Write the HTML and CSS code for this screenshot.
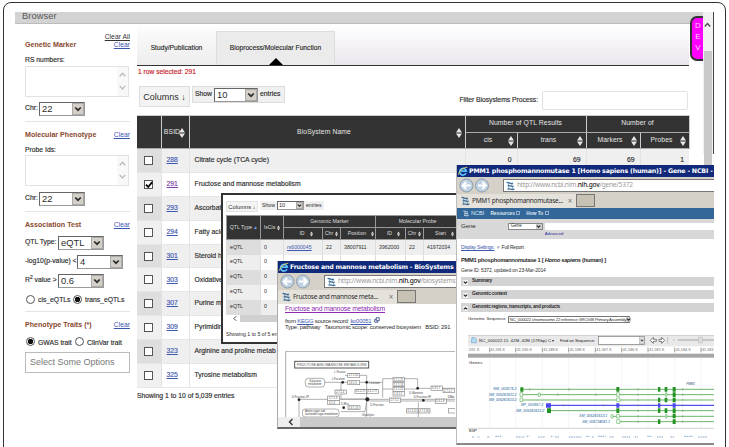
FILE: index.html
```html
<!DOCTYPE html>
<html lang="en">
<head>
  <meta charset="UTF-8">
  <title>Browser</title>
  <meta name="viewport" content="width=device-width, initial-scale=1">
  <link rel="stylesheet" href="styles.css">
</head>
<body>
  <svg width="0" height="0" class="defs">
    <symbol id="chev" viewBox="0 0 8 8"><path d="M1.2 2.5 4 5.2 6.8 2.5" fill="none" stroke="currentColor" stroke-width="1.7"/></symbol>
    <symbol id="sort" viewBox="0 0 6 10"><path d="M3 0 6 4.4H0zM3 10 6 5.6H0z" fill="currentColor"/></symbol>
    <symbol id="scroll" viewBox="0 0 8 26"><path d="M.8 7 4 3.5 7.2 7M.8 18 4 21.5 7.2 18" fill="none" stroke="#bbb" stroke-width="1.5"/></symbol>
    <symbol id="ie" viewBox="0 0 10 10"><path d="M8 7.2A3.3 3.3 0 1 1 8.3 5.2H3" fill="none" stroke="#5bc0f5" stroke-width="1.7"/><path d="M.8 8.8C-.4 7 5 1 9.3 1.3" fill="none" stroke="#f3d25b" stroke-width=".9"/></symbol>
    <symbol id="ncbi" viewBox="0 0 9 10"><path d="M.6 1.6C2.5.3 3.5 3.6 7 2.2M1.6 5C3.2 3.6 5 6.4 7.8 5M1.6 8.4C3.8 6.6 5 9.8 8.4 8" fill="none" stroke="currentColor" stroke-width="1.3"/><path d="M2 2.2 3.2 4.6M6 5.6l1 2.2M6.4 2.6 5.6 4.6M3 5.2l-.8 2.4" stroke="currentColor" stroke-width=".7"/></symbol>
    <symbol id="nav" viewBox="0 0 30 15">
      <circle cx="7.5" cy="7.5" r="6.5" fill="#c0d2e2" stroke="#8d9dab"/><circle cx="23" cy="7.5" r="6.5" fill="#c0d2e2" stroke="#8d9dab"/>
      <path d="M11.5 7.5H4M7.2 4 3.7 7.5 7.2 11M19 7.5h7.5M23.3 4l3.5 3.5-3.5 3.5" fill="none" stroke="#fff" stroke-width="2"/>
    </symbol>
  </svg>

  <div class="frame">
    <div class="topbar"><span>Browser</span></div>
    <div class="page">
      <aside class="sidebar">
        <div class="clear-all"><a>Clear All</a></div>
        <section class="group first">
          <div class="group-head"><h2>Genetic Marker</h2><a>Clear</a></div>
          <label class="lbl">RS numbers:</label>
          <div class="area"><svg><use href="#scroll"/></svg></div>
          <div class="field chr"><span>Chr:</span><div class="select">22<i><svg><use href="#chev"/></svg></i></div></div>
        </section>
        <section class="group">
          <div class="group-head"><h2>Molecular Phenotype</h2><a>Clear</a></div>
          <label class="lbl">Probe Ids:</label>
          <div class="area"><svg><use href="#scroll"/></svg></div>
          <div class="field chr"><span>Chr:</span><div class="select">22<i><svg><use href="#chev"/></svg></i></div></div>
        </section>
        <section class="group assoc">
          <div class="group-head"><h2>Association Test</h2><a>Clear</a></div>
          <div class="field qtl"><span>QTL Type:</span><div class="select">eQTL<i><svg><use href="#chev"/></svg></i></div></div>
          <div class="field pval"><span>-log10(p-value) &lt;</span><div class="select">4<i><svg><use href="#chev"/></svg></i></div></div>
          <div class="field qtl"><span>R<sup>2</sup> value &gt;</span><div class="select">0.6<i><svg><use href="#chev"/></svg></i></div></div>
          <div class="radios"><b class="radio"></b><span class="w1">cis_eQTLs</span><b class="radio on"></b><span>trans_eQTLs</span></div>
        </section>
        <section class="group traits">
          <div class="group-head"><h2>Phenotype Traits (*)</h2><a>Clear</a></div>
          <div class="radios"><b class="radio on"></b><span class="w2">GWAS trait</span><b class="radio"></b><span>ClinVar trait</span></div>
          <div class="options">Select Some Options</div>
        </section>
      </aside>

      <main class="main">
        <nav class="tabs">
          <div class="tab">Study/Publication</div>
          <div class="tab active">Bioprocess/Molecular Function</div>
        </nav>
        <p class="selected">1 row selected: 291</p>
        <div class="tools">
          <div class="columns">Columns ↓</div>
          <div class="show"><span>Show</span><div class="select">10<i><svg><use href="#chev"/></svg></i></div><span>entries</span></div>
          <div class="filter"><span>Filter Biosystems Process:</span><div class="filter-box"></div></div>
        </div>
        <table class="grid">
          <colgroup><col class="c1"><col class="c2"><col class="c3"><col class="c4"><col class="c5"><col class="c6"><col class="c7"></colgroup>
          <thead>
            <tr>
              <th rowspan="2"></th>
              <th rowspan="2" class="bsid"><div>BSID<svg><use href="#sort"/></svg></div></th>
              <th rowspan="2"><div>BioSystem Name<svg><use href="#sort"/></svg></div></th>
              <th colspan="2">Number of QTL Results</th>
              <th colspan="2">Number of</th>
            </tr>
            <tr>
              <th><div>cis<svg><use href="#sort"/></svg></div></th>
              <th><div>trans<svg><use href="#sort"/></svg></div></th>
              <th><div>Markers<svg><use href="#sort"/></svg></div></th>
              <th><div>Probes<svg><use href="#sort"/></svg></div></th>
            </tr>
          </thead>
          <tbody>
            <tr><td><b class="check"></b></td><td><a>288</a></td><td>Citrate cycle (TCA cycle)</td><td>0</td><td>69</td><td>69</td><td>1</td></tr>
            <tr><td><b class="check"><svg viewBox="0 0 8 8"><path d="M1 3.6 3.2 6 7.2 1.2" fill="none" stroke="#000" stroke-width="1.8"/></svg></b></td><td><a class="visited">291</a></td><td>Fructose and mannose metabolism</td><td></td><td></td><td></td><td></td></tr>
            <tr><td><b class="check"></b></td><td><a>293</a></td><td>Ascorbat</td><td></td><td></td><td></td><td></td></tr>
            <tr><td><b class="check"></b></td><td><a>294</a></td><td>Fatty acid</td><td></td><td></td><td></td><td></td></tr>
            <tr><td><b class="check"></b></td><td><a>301</a></td><td>Steroid h</td><td></td><td></td><td></td><td></td></tr>
            <tr><td><b class="check"></b></td><td><a>303</a></td><td>Oxidative</td><td></td><td></td><td></td><td></td></tr>
            <tr><td><b class="check"></b></td><td><a>307</a></td><td>Purine m</td><td></td><td></td><td></td><td></td></tr>
            <tr><td><b class="check"></b></td><td><a>309</a></td><td>Pyrimidin</td><td></td><td></td><td></td><td></td></tr>
            <tr><td><b class="check"></b></td><td><a>323</a></td><td>Arginine and proline metab</td><td></td><td></td><td></td><td></td></tr>
            <tr><td><b class="check"></b></td><td><a>325</a></td><td>Tyrosine metabolism</td><td></td><td></td><td></td><td></td></tr>
          </tbody>
        </table>
        <p class="count">Showing 1 to 10 of 5,039 entries</p>
      </main>

      <div class="scrollbar"><svg viewBox="0 0 9 38"><path d="M1.8 14 4.5 11 7.2 14" fill="none" stroke="#555" stroke-width="1.5"/></svg><div></div></div>
    </div>
    <div class="dev"><span>D</span><span>E</span><span>V</span></div>
  </div>

  <!-- eQTL details -->
  <div class="win details">
    <div class="dtools"><div class="dcols">Columns ↓</div><div class="dshow">Show <div class="select">10<i><svg><use href="#chev"/></svg></i></div> entries</div></div>
    <table class="dgrid">
      <colgroup><col class="d1"><col class="d2"><col class="d3"><col class="d4"><col class="d5"><col class="d6"><col class="d7"><col class="d8"></colgroup>
      <thead>
        <tr><th rowspan="2"><div>QTL Type <em>▴</em></div></th><th rowspan="2"><div>IsCis<svg><use href="#sort"/></svg></div></th><th colspan="3">Genomic Marker</th><th colspan="3">Molecular Probe</th></tr>
        <tr>
          <th><div>ID<svg><use href="#sort"/></svg></div></th><th><div>Chr<svg><use href="#sort"/></svg></div></th><th><div>Position<svg><use href="#sort"/></svg></div></th>
          <th><div>ID<svg><use href="#sort"/></svg></div></th><th><div>Chr<svg><use href="#sort"/></svg></div></th><th><div>Start<svg><use href="#sort"/></svg></div></th>
        </tr>
      </thead>
      <tbody>
        <tr><td>eQTL</td><td>0</td><td><a>rs6000045</a></td><td>22</td><td>38007911</td><td>3962000</td><td>22</td><td>41972034</td></tr>
        <tr><td>eQTL</td><td>0</td><td></td><td></td><td></td><td></td><td></td><td></td></tr>
        <tr><td>eQTL</td><td>0</td><td></td><td></td><td></td><td></td><td></td><td></td></tr>
        <tr><td>eQTL</td><td>0</td><td></td><td></td><td></td><td></td><td></td><td></td></tr>
        <tr><td>eQTL</td><td>0</td><td></td><td></td><td></td><td></td><td></td><td></td></tr>
      </tbody>
    </table>
    <div class="hscroll"><svg viewBox="0 0 8 8"><path d="M5.5 1 2.5 4l3 3" fill="none" stroke="#333" stroke-width="1.2"/></svg><div></div></div>
    <p class="dcount">Showing 1 to 5 of 5 ent</p>
  </div>

  <!-- BioSystems page -->
  <div class="win bio">
    <div class="title"><svg><use href="#ie"/></svg><span>Fructose and mannose metabolism - BioSystems</span></div>
    <div class="address"><svg class="nav"><use href="#nav"/></svg><div class="url"><svg><use href="#ncbi"/></svg><span>http://www.ncbi.nlm.<b>nih.gov</b>/biosystems</span></div></div>
    <div class="wtabs"><div class="wtab"><svg><use href="#ncbi"/></svg><span>Fructose and mannose meta...</span><i>×</i></div><div class="newtab"></div></div>
    <div class="bio-body">
      <a class="bio-title">Fructose and mannose metabolism</a>
      <p>from <a>KEGG</a> source record: <a>ko00051</a> &nbsp;<svg viewBox="0 0 8 8"><path d="M3 1h4v4H3zM3 3H1v4h4V5" fill="none" stroke="#22337a"/></svg></p>
      <p class="type">Type: pathway &nbsp; Taxonomic scope: conserved biosystem &nbsp; BSID: 291</p>
      <svg class="pathway" viewBox="210 124 510 198">
        <path d="M212 322V125H720" fill="none" stroke="#aaa" stroke-width="3"/>
        <rect x="239" y="155" width="222" height="20" fill="#fff" stroke="#555" stroke-width="3"/>
        <text x="246" y="170" font-size="12" fill="#555" textLength="208" lengthAdjust="spacingAndGlyphs">FRUCTOSE AND MANNOSE METABOLISM</text>
        <g fill="none" stroke="#888" stroke-width="2">
          <path d="M330 218H455M378 218v50M390 197h65v123M455 218h48V207h105v28M503 218v46M503 238h102M248 269H720M455 274H720M252 269v53M378 306h72l6-36M610 278v44M605 236h115M378 268h77"/>
        </g>
        <g fill="#fff" stroke="#888" stroke-width="2">
          <rect x="271" y="206" width="58" height="26" rx="9"/><rect x="262" y="298" width="110" height="24" rx="9"/>
          <rect x="398" y="191" width="36" height="12"/><rect x="398" y="213" width="36" height="12"/><rect x="360" y="241" width="34" height="12"/>
          <rect x="420" y="239" width="34" height="12"/><rect x="456" y="239" width="34" height="12"/><rect x="338" y="259" width="36" height="13"/><rect x="338" y="272" width="36" height="13"/>
          <rect x="399" y="288" width="36" height="12"/><rect x="534" y="203" width="34" height="13"/><rect x="534" y="218" width="34" height="13"/><rect x="534" y="232" width="34" height="13"/><rect x="534" y="246" width="34" height="13"/>
          <rect x="523" y="265" width="34" height="13"/><rect x="648" y="229" width="34" height="13"/><rect x="684" y="236" width="34" height="13"/><rect x="661" y="268" width="34" height="13"/><rect x="575" y="297" width="34" height="13"/><rect x="611" y="297" width="34" height="13"/><rect x="700" y="297" width="34" height="13"/>
        </g>
        <g font-size="8" fill="#444">
          <text x="283" y="216">Galactose</text><text x="279" y="227">metabolism</text><text x="270" y="308">Amino sugar and</text><text x="270" y="317" textLength="98">nucleotide sugar metabolism</text>
          <text x="358" y="189">L-Fucose</text><text x="350" y="212">L-Fuculose</text><text x="461" y="222">L-Lactate</text><text x="230" y="264">D-Fructose-1P</text><text x="378" y="286">D-Rha</text><text x="466" y="289">D-Fructose</text><text x="441" y="319">Glycolysis</text><text x="583" y="252">D-Mannose</text><text x="596" y="266">D-Fructose-6P</text><text x="698" y="266" textLength="20">D-Man</text>
          <text x="401" y="200">2.7.1.52</text><text x="401" y="222">5.3.1.3</text><text x="363" y="250">2.7.1.4</text><text x="422" y="248">4.1.2.17</text><text x="458" y="248">1.1.1.77</text><text x="342" y="269">2.7.1.3</text><text x="342" y="282">3.1.3</text><text x="401" y="297">5.3.1.14</text><text x="536" y="213">1.1.1.21</text><text x="536" y="228">1.1.1.14</text><text x="536" y="242">1.1.1.15</text><text x="537" y="256">5.3.1.5</text><text x="527" y="275">2.7.1.1</text><text x="651" y="239">5.3.1.7</text><text x="687" y="246">2.7.1.7</text><text x="664" y="278">5.3.1.8</text><text x="577" y="307">3.1.3.11</text><text x="613" y="307">2.7.1.90</text>
        </g>
        <g fill="#222"><circle cx="455" cy="218" r="4"/><circle cx="457" cy="269" r="6"/><circle cx="252" cy="270" r="4"/><circle cx="383" cy="218" r="4"/><circle cx="608" cy="236" r="4"/><circle cx="625" cy="272" r="4"/><circle cx="386" cy="294" r="4"/></g>
      </svg>
    </div>
    <div class="bio-scroll"><svg viewBox="0 0 8 8"><path d="M5.5 1 2.5 4l3 3" fill="none" stroke="#333" stroke-width="1.4"/></svg><div></div></div>
  </div>

  <!-- Gene page -->
  <div class="win gene">
    <div class="title"><svg><use href="#ie"/></svg><span>PMM1 phosphomannomutase 1 [Homo sapiens (human)] - Gene - NCBI -</span></div>
    <div class="address"><svg class="nav"><use href="#nav"/></svg><div class="url"><svg><use href="#ncbi"/></svg><span>http://www.ncbi.nlm.<b>nih.gov</b>/gene/5372</span></div></div>
    <div class="wtabs"><div class="wtab"><svg><use href="#ncbi"/></svg><span>PMM1 phosphomannomutase...</span><i>×</i></div><div class="newtab"></div></div>
    <div class="ncbi-bar"><svg><use href="#ncbi"/></svg><span>NCBI</span><b>Resources <u></u></b><b>How To <u></u></b></div>
    <div class="gene-search"><span>Gene</span><div class="gsel">Gene<i><svg><use href="#chev"/></svg></i></div><div class="gbox"><div></div><a>Advanced</a></div></div>
    <div class="gene-body">
      <p class="display"><a>Display Settings:</a> <i>▾</i> Full Report</p>
      <h3>PMM1 phosphomannomutase 1 [ <em>Homo sapiens</em> (human) ]</h3>
      <p class="gid">Gene ID: 5372, updated on 23-Mar-2014</p>
      <div class="acc"><i><svg><use href="#chev"/></svg></i>Summary</div>
      <div class="acc"><i><svg><use href="#chev"/></svg></i>Genomic context</div>
      <div class="acc open"><i><svg><use href="#chev"/></svg></i>Genomic regions, transcripts, and products</div>
      <div class="seq"><span>Genomic Sequence</span><div>NC_000022 chromosome 22 reference GRCh38 Primary Assembly<i><svg><use href="#chev"/></svg></i></div></div>
      <svg class="viewer" viewBox="54 136 738 318">
        <rect x="54" y="136" width="738" height="34" fill="#e9e9e9"/><path d="M54 136H792" stroke="#bbb" stroke-width="3"/>
        <path d="M66 144h8l5 5v10H64z" fill="#b9dcf2" stroke="#65a6d3" stroke-width="2"/>
        <g font-size="13" fill="#222"><text x="87" y="156" textLength="226">NC_000022.11: 42M..42M (17Kbp) C ▾</text><text x="330" y="156" textLength="105">Find on Sequence:</text></g>
        <rect x="445" y="140" width="138" height="24" fill="#fff" stroke="#777" stroke-width="2"/><rect x="568" y="141" width="15" height="22" fill="#ddd" stroke="#888"/><path d="m571 150 5 6 5-6z" fill="#444"/>
        <path d="m601 152 9-9v6h9v6h-9v6zM644 152l-9-9v6h-8v6h8v6z" fill="#fff" stroke="#444" stroke-width="2"/>
        <path d="M653 142v20M668 151h6" stroke="#aaa" stroke-width="2"/><path d="M683 151h109" stroke="#bbb" stroke-width="5"/><rect x="746" y="142" width="11" height="18" fill="#ddd" stroke="#aaa"/>
        <path d="M119 172v244M197 172v244M277 172v244M356 172v244M436 172v244M515 172v244M594 172v244M674 172v244M753 172v244" stroke="#eee" stroke-width="2"/>
        <g font-size="11" fill="#666"><text x="56" y="184" textLength="32">592 K</text><text x="121" y="184" textLength="44">41,591 K</text><text x="200" y="184" textLength="46">41,590 K</text><text x="280" y="184" textLength="44">41,589 K</text><text x="359" y="184" textLength="46">41,588 K</text><text x="439" y="184" textLength="46">41,587 K</text><text x="518" y="184" textLength="46">41,586 K</text><text x="597" y="184" textLength="46">41,585 K</text><text x="677" y="184" textLength="46">41,584 K</text><text x="756" y="184" textLength="34">41,583</text></g>
        <path d="M119 174v14M197 174v14M277 174v14M356 174v14M436 174v14M515 174v14M594 174v14M674 174v14M753 174v14" stroke="#777" stroke-width="2"/>
        <rect x="54" y="192" width="738" height="12" fill="#a5a5a5"/>
        <text x="57" y="224" font-size="13" fill="#222" textLength="40">Genes</text>
        <text x="709" y="286" font-size="12" font-style="italic" fill="#347" textLength="26" lengthAdjust="spacingAndGlyphs">PMM1</text>
        <g stroke="#69b669" stroke-width="3"><path d="M212 299H792M212 315H792M212 331H792M302 363H792M485 380H792M500 396H792"/></g>
        <path d="M300 347H792" stroke="#5450ed" stroke-width="4"/>
        <path d="M238 295l4 4-4 4M322 311l4 4-4 4M357 295v8M438 311v8M340 343v8M460 343v8M564 295v8M564 311v8M564 327v8M564 343v8M564 359v8M564 376v8M564 392v8M698 295v8M698 311v8M698 327v8M698 343v8M698 359v8M698 376v8M698 392v8" fill="none" stroke="#8a9a85" stroke-width="2"/>
        <g fill="#239223"><path d="M211 293h9v13h-9zM291 356h12v14h-12zM499 292h9v14h-9zM499 356h9v14h-9zM624 292h7v14h-7zM644 292h8v14h-8zM668 292h9v14h-9zM668 308h9v14h-9zM624 324h7v14h-7zM644 324h8v14h-8zM668 324h9v14h-9zM624 356h7v14h-7zM644 356h8v14h-8zM668 356h9v14h-9zM668 372h9v14h-9zM624 389h7v14h-7zM668 389h9v14h-9z"/></g>
        <g fill="#fff" stroke="#69b669" stroke-width="2"><path d="M210 309h8v11h-8zM210 325h8v11h-8zM265 310h6v10h-6zM500 309h8v11h-8zM500 325h10v11h-10zM483 375h6v10h-6zM500 374h8v11h-8zM500 390h10v11h-10zM647 309h4v11h-4zM647 374h4v11h-4z"/></g>
        <path d="M288 341h15v13h-15zM499 341h9v13h-9zM624 341h7v13h-7zM668 341h9v13h-9z" fill="#4b47ed"/>
        <g font-size="11" font-style="italic" fill="#235f9b"><text x="130" y="302" textLength="70">NM_002676.2</text><text x="116" y="318" textLength="84">XM_005261611.2</text><text x="116" y="334" textLength="84">XM_005261610.2</text><text x="213" y="350" textLength="67">NP_002667.2</text><text x="197" y="367" textLength="86">XM_005261612.2</text><text x="387" y="383" textLength="86">XM_005261613.1</text><text x="396" y="399" textLength="84">XM_006724181.1</text></g>
        <path d="M54 416H792" stroke="#bbb" stroke-width="2"/>
        <text x="57" y="428" font-size="13" fill="#222" textLength="24">EXP</text>
        <path d="M66 442h8M83 442h5M112 442h8M136 440h18M198 442h25M230 440h8M265 442h20M302 440h8M315 442h14M357 442h38M408 440h10M426 442h5M444 440h23M479 442h14M516 442h25M554 442h10M592 440h12M621 442h18M661 442h14M703 440h25M745 442h28" stroke="#8aaacb" stroke-width="3" stroke-dasharray="5 2"/>
      </svg>
    </div>
  </div>
</body>
</html>
```

FILE: styles.css
```css
* {
  box-sizing: border-box;
}
body {
  font-family: "Liberation Sans", Arial, sans-serif;
  font-size: 6.8px;
  line-height: 1;
  color: #2c2c2c;
  background: #fff;
  margin: 0;
  height: 447px;
  overflow: hidden;
  position: relative;
}
p, h2, h3 {
  margin: 0;
}
a {
  color: #3d58b0;
  text-decoration: underline;
}
i {
  font-style: normal;
}
svg {
  flex: none;
}
.defs {
  position: absolute;
}
.frame {
  position: relative;
  width: 723px;
  height: 460px;
  margin: 2px 0 0 3px;
  padding: 9px 0 0 11px;
  border: 1.5px solid #333;
  border-radius: 8px;
}
.topbar {
  width: 699px;
  height: 12px;
  background: #d3d3d3;
  border-bottom: 1px solid #bcbcbc;
}
.topbar span {
  display: block;
  padding-left: 7px;
  line-height: 8px;
  font-size: 9.3px;
  letter-spacing: 0.1px;
  color: #555;
}
.page {
  display: flex;
  width: 699px;
}

/* sidebar */
.sidebar {
  width: 105px;
  margin-left: 10px;
  padding-top: 8px;
}
.lbl, .field > span, .radios span, .tab, .selected, .show > span, .filter > span, .grid td, .count {
  -webkit-text-stroke: 0.15px;
}
.clear-all {
  height: 8px;
  text-align: right;
  line-height: 9px;
}
.clear-all a {
  color: #333;
}
.group {
  height: 90px;
  padding-top: 7px;
  border-bottom: 1px solid #e4e4e4;
}
.group-head {
  display: flex;
  justify-content: space-between;
  align-items: center;
  height: 13px;
}
.group-head h2 {
  font-size: 7.1px;
  color: #89492e;
}
.lbl {
  display: block;
  height: 13px;
  line-height: 15px;
}
.group.first {
  height: 82px;
  padding-top: 0;
}
.first .group-head {
  height: 11px;
}
.first .lbl {
  height: 15px;
  line-height: 17px;
}
.area {
  width: 104px;
  height: 31px;
  border: 1px solid #e2e2e2;
  display: flex;
  justify-content: flex-end;
}
.area svg {
  width: 11px;
  height: 29px;
  padding: 1px 2px;
  background: #f8f8f8;
}
.field {
  display: flex;
  align-items: center;
  justify-content: space-between;
  height: 19px;
  white-space: nowrap;
}
.chr {
  width: 60px;
  height: 25px;
}
.first .chr {
  height: 23px;
}
.qtl {
  width: 79px;
}
.pval {
  width: 98px;
}
.field sup {
  font-size: 5px;
  line-height: 0;
}
.select {
  display: flex;
  align-items: center;
  width: 46px;
  height: 14px;
  padding-left: 2px;
  font-size: 9.4px;
  background: #fff;
  border: 1px solid #999;
  border-top: 1.5px solid #666;
  border-left-color: #666;
}
.select i {
  display: flex;
  align-items: center;
  justify-content: center;
  width: 12px;
  height: 100%;
  margin-left: auto;
  background: #d4d0c8;
  border: 1px solid #aaa;
}
.select svg {
  width: 8px;
  height: 8px;
}
.assoc {
  height: 100px;
}
.assoc .group-head {
  margin-bottom: 1px;
}
.radios {
  display: flex;
  align-items: center;
  height: 18px;
  padding-left: 1px;
}
.radios span {
  margin: 3px 0 0 3px;
}
.radios .w1 {
  width: 35px;
}
.radios .w2 {
  width: 37px;
}
.radio {
  width: 9px;
  height: 9px;
  border: 1px solid #555;
  border-radius: 50%;
  background: #fff;
}
.radio.on {
  background: radial-gradient(circle, #111 0 2.5px, #fff 3px);
}
.traits {
  border: 0;
}
.traits .radios {
  height: 19px;
}
.options {
  height: 21px;
  margin-top: 1px;
  padding: 5px 4px;
  border: 1px solid #bbb;
  font-size: 9px;
  color: #777;
}

/* main panel */
.main {
  width: 552px;
  margin-left: 7px;
}
.tabs {
  display: flex;
  height: 42px;
  padding-top: 7px;
  background: linear-gradient(#fff, #ebe6ed);
  border-bottom: 1px solid #333;
}
.tab {
  width: 79px;
  background: linear-gradient(#fafafa, #ededed);
  line-height: 33px;
  text-align: center;
  font-size: 6.7px;
}
.tab.active {
  position: relative;
  width: 119px;
  background: #ebebeb;
  border: 1px solid #ddd;
  border-bottom: 0;
  line-height: 31px;
}
.tab.active::after {
  content: "";
  position: absolute;
  left: 52px;
  bottom: 0;
  border: 7px solid transparent;
  border-top: 0;
  border-bottom-color: #000;
}
.selected {
  height: 20px;
  padding: 3px 0 0 1px;
  font-size: 6.7px;
  color: #c8202a;
}
.tools {
  display: flex;
  height: 29px;
  padding-left: 2px;
}
.columns {
  width: 51px;
  height: 21px;
  line-height: 20px;
  font-size: 9px;
  text-align: center;
  background: #f3f3f3;
  border: 1px solid #ddd;
}
.show {
  display: flex;
  align-items: center;
  gap: 2px;
  width: 93px;
  height: 17px;
  margin-left: 2px;
  padding-left: 2px;
  background: #f0f0f0;
  border: 1px solid #ddd;
}
.show .select {
  width: 44px;
}
.filter {
  display: flex;
  align-items: center;
  height: 19px;
  margin: 5px 0 0 auto;
}
.filter > span {
  letter-spacing: -0.06px;
}
.filter-box {
  width: 146px;
  height: 19px;
  margin: 0 1px 0 4px;
  border: 1px solid #e2e2e2;
  border-radius: 2px;
}
.grid {
  width: 552px;
  table-layout: fixed;
  border-collapse: collapse;
}
.c1 { width: 24px; }
.c2 { width: 28px; }
.c3 { width: 276px; }
.c4 { width: 52px; }
.c5 { width: 69px; }
.c6 { width: 54px; }
.c7 { width: 49px; }
.grid th {
  height: 16.5px;
  padding: 0;
  background: #333;
  border: 1px solid #ccc;
  border-bottom-color: #aaa;
  color: #e5e5e5;
  font-weight: normal;
  letter-spacing: 0.1px;
}
.grid th:first-child {
  border-left: 0;
}
.grid tr:nth-child(2) th:first-child {
  border-left: 1px solid #ccc;
}
.grid th div {
  display: flex;
  align-items: center;
  justify-content: center;
  position: relative;
  padding-right: 6px;
}
.grid th svg {
  position: absolute;
  right: 3px;
  top: -1px;
  width: 6px;
  height: 10px;
}
.grid .bsid svg {
  right: 4px;
}
.grid td {
  height: 23.9px;
  padding: 0 5px;
  border-left: 1px solid #e3e3e3;
  border-bottom: 1px solid #e6e6e6;
}
.grid td:nth-child(1) {
  background: #f0f0f0;
  padding: 0 0 0 7px;
  border-left: 0;
}
.grid td:nth-child(n+4) {
  text-align: right;
}
.grid tbody tr:nth-child(odd) {
  background: #efefef;
}
.grid tbody tr:nth-child(odd) td:nth-child(1) {
  background: #dedede;
}
.grid .visited {
  color: #7b3fa5;
}
.check {
  display: block;
  width: 9px;
  height: 9px;
  border: 1px solid #555;
  background: #fff;
}
.check svg {
  display: block;
  width: 8px;
  height: 8px;
}
.count {
  margin-top: 5px;
}
.scrollbar {
  width: 11px;
  height: 142px;
  margin-left: auto;
  margin-top: -12px;
  padding-right: 1px;
  background: #f1f1f1;
  border-right: 1px solid #444;
}
.scrollbar svg {
  display: block;
  width: 9px;
  height: 39px;
}
.scrollbar div {
  width: 8px;
  height: 115px;
  margin-left: 1px;
  background: #c9c9c9;
}
.dev {
  position: absolute;
  left: 686px;
  top: 13px;
  width: 13px;
  height: 45px;
  padding: 4px 0 0 1px;
  border: 2px solid #333;
  border-right: 0;
  border-radius: 7px 0 0 7px;
  background: #f0f;
  color: #ffd6ff;
  font-size: 8px;
  text-align: center;
}
.dev span {
  display: block;
  height: 11px;
}

/* overlapping windows */
.win {
  position: absolute;
  background: #fff;
  overflow: hidden;
  white-space: nowrap;
}
.details {
  left: 221px;
  top: 193px;
  width: 240px;
  height: 151px;
  padding: 6px 0 0 3px;
  border: 2px solid #333;
  font-size: 5.2px;
}
.dtools {
  display: flex;
  gap: 2px;
  height: 14px;
}
.dcols {
  width: 32px;
  height: 11px;
  line-height: 11px;
  font-size: 5.8px;
  text-align: center;
  background: #f4f4f4;
  border: 1px solid #e2e2e2;
}
.dshow {
  display: flex;
  align-items: center;
  gap: 2px;
  height: 9px;
  padding: 0 2px;
  background: #f0f0f0;
}
.dshow .select {
  width: 27px;
  height: 9px;
  padding-left: 1px;
  font-size: 5.6px;
}
.dshow .select i {
  width: 7px;
}
.dshow .select svg {
  width: 5px;
  height: 5px;
}
.dgrid {
  width: 233px;
  table-layout: fixed;
  border-collapse: collapse;
}
.d1 { width: 34px; }
.d2 { width: 23px; }
.d3 { width: 39px; }
.d4 { width: 18px; }
.d5 { width: 35px; }
.d6 { width: 30px; }
.d7 { width: 18px; }
.d8 { width: 36px; }
.dgrid th {
  height: 12px;
  padding: 0;
  border: 1px solid #999;
  background: #333;
  color: #ddd;
  font-weight: normal;
}
.dgrid th div {
  display: flex;
  align-items: center;
  justify-content: center;
  gap: 2px;
}
.dgrid tr:nth-child(2) th:not(:nth-child(3n+2)) div {
  padding-left: 6px;
  gap: 5px;
}
.dgrid th svg {
  width: 3px;
  height: 6px;
}
.dgrid em {
  color: #79a7ff;
}
.dgrid td {
  height: 15px;
  padding: 0 0 0 3px;
  border-left: 1px solid #ddd;
}
.dgrid tbody tr:nth-child(odd) {
  background: #eee;
}
.dgrid td:first-child {
  background: #eee;
}
.dgrid tr:nth-child(odd) td:first-child {
  background: #ddd;
}
.hscroll {
  display: flex;
  height: 7px;
  padding-left: 6px;
}
.hscroll svg {
  width: 6px;
  height: 7px;
}
.hscroll div {
  flex: 1;
  margin-left: 2px;
  background: #d0d0d0;
}
.dcount {
  margin-top: 10px;
}

.title {
  display: flex;
  align-items: center;
  height: 12px;
  background: #10297b;
  color: #fff;
  font-family: "DejaVu Sans", sans-serif;
  font-size: 6.3px;
  font-weight: bold;
}
.title svg {
  width: 10px;
  height: 10px;
  margin: 0 1px;
}
.address {
  display: flex;
  align-items: center;
  height: 17px;
  padding-left: 2px;
  background: #d5d1c8;
  font-family: "Noto Sans", sans-serif;
  font-size: 6.6px;
  letter-spacing: -0.22px;
}
.nav {
  width: 30px;
  height: 15px;
}
.url {
  display: flex;
  align-items: center;
  flex: 1;
  height: 13px;
  margin-left: 14px;
  padding-left: 2px;
  background: #fff;
  border: 1px solid #777;
  border-right: 0;
  color: #999;
}
.url b {
  color: #222;
  font-weight: 500;
}
.url svg, .wtab svg {
  width: 9px;
  height: 10px;
  margin-right: 2px;
  color: #3f6f99;
}
.wtabs {
  display: flex;
  height: 14px;
  background: #d5d1c8;
  font-family: "Noto Sans", sans-serif;
  font-size: 6.5px;
  letter-spacing: -0.27px;
}
.wtab {
  display: flex;
  align-items: center;
  width: 119px;
  padding-left: 4px;
  background: #e5e2dc;
}
.wtab i {
  margin: 0 4px 0 auto;
  font-size: 8px;
  color: #777;
}
.newtab {
  width: 19px;
  height: 13px;
  background: #c8c2b4;
  border: 1px solid #777;
}

.bio {
  left: 277px;
  top: 261px;
  width: 180px;
  height: 168px;
  border-left: 1px solid #aaa;
  border-bottom: 2px solid #666;
}
.bio .title span {
  letter-spacing: -0.2px;
}
.bio-body {
  height: 113px;
  padding: 2px 0 0 7px;
  font-size: 5.9px;
  letter-spacing: -0.24px;
}
.bio-title {
  display: block;
  height: 11px;
  font-size: 6.8px;
  letter-spacing: -0.2px;
  color: #8c2cb0;
}
.bio-body p {
  height: 8px;
}
.bio-body .type {
  letter-spacing: -0.21px;
}
.bio-body p svg {
  width: 6px;
  height: 6px;
}
.pathway {
  display: block;
  width: 170px;
  height: 66px;
  margin-top: 18px;
}
.pathway text, .viewer text {
  letter-spacing: 0;
}
.bio-scroll {
  display: flex;
  height: 10px;
  background: #eee;
}
.bio-scroll svg {
  width: 8px;
  height: 8px;
  margin: 1px 5px 0 9px;
}
.bio-scroll div {
  flex: 1;
  background: #cbcbcb;
}

.gene {
  left: 456px;
  top: 165px;
  width: 258px;
  height: 280px;
  border-left: 1px solid #bbb;
  border-bottom: 2px solid #888;
}
.gene .title span {
  letter-spacing: -0.18px;
}
.ncbi-bar {
  display: flex;
  align-items: center;
  height: 11px;
  padding-left: 6px;
  background: #336699;
  color: #dde8f2;
  font-size: 5.6px;
}
.ncbi-bar svg {
  width: 6px;
  height: 7px;
  margin-right: 2px;
}
.ncbi-bar b {
  margin-left: 6px;
  font-size: 4.8px;
}
.ncbi-bar u {
  display: inline-block;
  width: 4px;
  height: 4px;
  border: 1px solid #8fb0cf;
}
.gene-search {
  display: flex;
  height: 20px;
  padding: 4px 0 0 4px;
  background: #d8d8d8;
  font-size: 6px;
}
.gsel {
  display: flex;
  justify-content: space-between;
  width: 35px;
  height: 7px;
  margin-left: 32px;
  padding-left: 2px;
  background: #fff;
  border: 1px solid #888;
  font-size: 4.6px;
}
.gsel i, .seq i {
  display: flex;
  width: 6px;
  background: #ccc;
}
.gsel svg, .seq svg, .acc svg {
  width: 5px;
  height: 5px;
}
.gbox {
  flex: 1;
  margin-left: 2px;
  font-size: 4.2px;
}
.gbox div {
  height: 7px;
  margin-bottom: 2px;
  background: #fff;
}
.gbox a {
  color: #2a2a9a;
  text-decoration: none;
}
.gene-body {
  padding: 6px 0 0 4px;
}
.display {
  height: 13px;
  font-size: 5px;
  letter-spacing: -0.22px;
}
.display i {
  margin: 0 1px;
  color: #999;
}
.gene h3 {
  height: 11px;
  font-size: 5.8px;
  letter-spacing: -0.3px;
}
.gid {
  height: 8px;
  font-size: 4.9px;
}
.gene .gid {
  letter-spacing: -0.1px;
}
.acc {
  display: flex;
  align-items: center;
  height: 9px;
  margin-bottom: 4px;
  background: #d3d3d3;
  font-size: 4.8px;
  letter-spacing: -0.28px;
  font-weight: bold;
}
.acc i {
  display: flex;
  width: 5px;
  height: 5px;
  margin: 1px 4px 0 2px;
  background: #f4f4f4;
}
.acc.open svg {
  transform: rotate(180deg);
}
.seq {
  display: flex;
  align-items: center;
  gap: 2px;
  padding-left: 7px;
  font-size: 4.3px;
}
.seq div {
  display: flex;
  justify-content: space-between;
  width: 122px;
  height: 7px;
  padding-left: 1px;
  border: 1px solid #777;
  line-height: 5px;
  letter-spacing: -0.2px;
}
.viewer {
  display: block;
  width: 246px;
  height: 106px;
  margin: 12px 0 0 7px;
}
```
